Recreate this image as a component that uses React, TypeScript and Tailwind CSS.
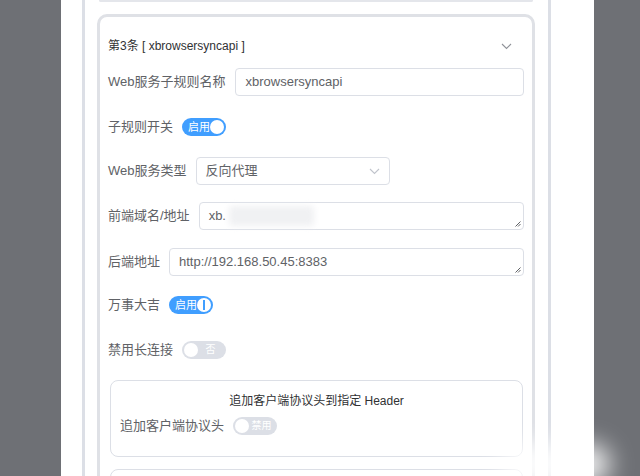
import React from "react";

const font = {
  fontFamily: '"Liberation Sans", "Noto Sans CJK SC", sans-serif',
};

function Switch({ on, text, half }: { on: boolean; text: string; half?: boolean }) {
  if (on) {
    return (
      <div className="flex h-[18px] w-[44px] items-center justify-between rounded-full bg-[#409eff] pl-[6px] pr-[2px]">
        <span className="text-[11px] leading-none text-white">{text}</span>
        <span className="relative h-[14px] w-[14px] rounded-full bg-white">
          {half && <span className="absolute left-[6px] top-[2px] h-[10px] w-[1.5px] bg-[#409eff]" />}
        </span>
      </div>
    );
  }
  return (
    <div className="flex h-[18px] w-[44px] items-center rounded-full bg-[#dcdfe6] pl-[2px] pr-[3px]">
      <span className="h-[14px] w-[14px] shrink-0 rounded-full bg-white" />
      <span className="flex-1 text-center text-[10px] leading-none text-white">{text}</span>
    </div>
  );
}

function Chevron({ className }: { className?: string }) {
  return (
    <svg width="11" height="7" viewBox="0 0 11 7" className={className} fill="none">
      <path d="M1 1l4.5 4.5L10 1" stroke="currentColor" strokeWidth="1.1" />
    </svg>
  );
}

function Row({ label, children, className }: { label: string; children: React.ReactNode; className?: string }) {
  return (
    <div className={`flex h-[28px] items-center gap-[9px] ${className ?? ""}`}>
      <span className="shrink-0 text-[13px] text-[#606266]">{label}</span>
      {children}
    </div>
  );
}

function TextArea({ value, blurred }: { value: string; blurred?: boolean }) {
  return (
    <div className="relative flex h-[28px] flex-1 items-center rounded-[4px] border border-[#dcdfe6] bg-white px-[9px] text-[13px] text-[#606266]">
      <span>{value}</span>
      {blurred && <span className="ml-[3px] h-[20px] w-[85px] rounded-sm bg-[#f0f1f3] blur-[3px]" />}
      <svg width="6" height="6" viewBox="0 0 6 6" className="absolute bottom-[2px] right-[2px]">
        <path d="M0.5 5.5L5.5 0.5M3 5.5L5.5 3" stroke="#606266" strokeWidth="1" />
      </svg>
    </div>
  );
}

export default function App() {
  return (
    <div className="relative h-[476px] w-[640px] overflow-hidden bg-[#6e7075]" style={font}>
      <div className="ml-[61px] h-full w-[533px] bg-white pl-[21px] pr-[43px]">
        <div className="h-full border-x-[3px] border-[#dcdfe6] pl-[12px] pr-[13px]">
          {/* previous card bottom */}
          <div className="mx-[2px] h-[2px] rounded-b-lg border-x-[3px] border-b-[2px] border-[#e4e6eb]" />

          {/* card 3 */}
          <div className="mt-[12px] h-[600px] rounded-[10px] border-[3px] border-[#dfe1e6] px-[8px]">
            <div className="mt-[19px] flex h-[20px] items-center justify-between pr-[12px]">
              <span className="text-[12px] text-[#303133]">第3条 [ xbrowsersyncapi ]</span>
              <Chevron className="text-[#909399]" />
            </div>

            <Row label="Web服务子规则名称" className="mt-[12px]">
              <div className="flex h-[28px] flex-1 items-center rounded-[4px] border border-[#dcdfe6] px-[10px] text-[13px] text-[#606266]">
                xbrowsersyncapi
              </div>
            </Row>

            <Row label="子规则开关" className="mt-[17px]">
              <Switch on text="启用" />
            </Row>

            <Row label="Web服务类型" className="mt-[16px]">
              <div className="flex h-[28px] w-[194px] items-center justify-between rounded-[4px] border border-[#dcdfe6] pl-[9px] pr-[9px] text-[13px] text-[#606266]">
                <span>反向代理</span>
                <Chevron className="text-[#c0c4cc]" />
              </div>
            </Row>

            <Row label="前端域名/地址" className="mt-[17px]">
              <TextArea value="xb." blurred />
            </Row>

            <Row label="后端地址" className="mt-[18px]">
              <TextArea value="http://192.168.50.45:8383" />
            </Row>

            <Row label="万事大吉" className="mt-[15px]">
              <Switch on text="启用" half />
            </Row>

            <Row label="禁用长连接" className="mt-[17px]">
              <Switch on={false} text="否" />
            </Row>

            <div className="mt-[16px] ml-[2px] mr-[1px] h-[77px] rounded-[8px] border-[1.5px] border-[#dcdfe6] px-[9px]">
              <div className="mt-[11px] text-center text-[12px] text-[#303133]">追加客户端协议头到指定 Header</div>
              <Row label="追加客户端协议头" className="mt-[2px]">
                <Switch on={false} text="禁用" />
              </Row>
            </div>

            <div className="mt-[12px] ml-[2px] mr-[1px] h-[77px] rounded-[8px] border-[1.5px] border-[#dcdfe6]" />
          </div>
        </div>
      </div>

      {/* watermark blur */}
      <div className="absolute bottom-[-8px] right-[30px] h-[40px] w-[110px] rounded-full bg-white/90 blur-md" />
    </div>
  );
}
